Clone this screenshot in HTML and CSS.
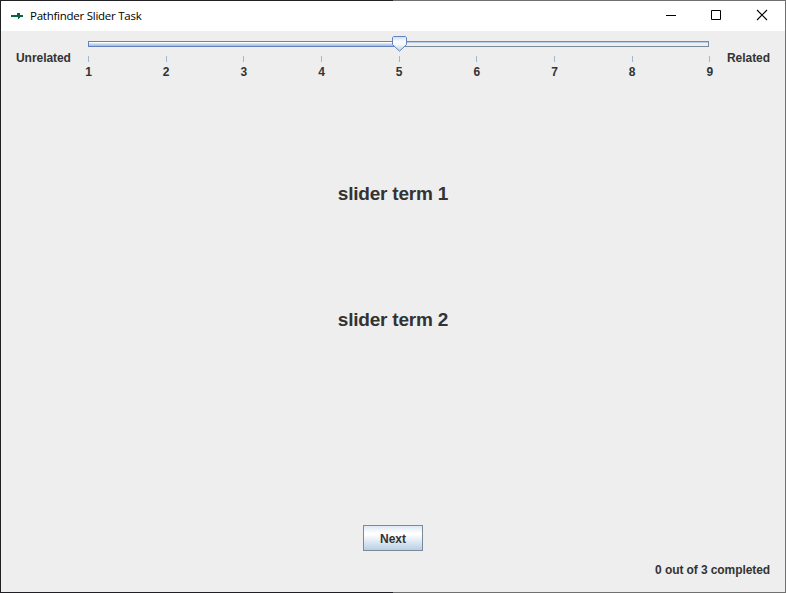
FILE: index.html
```html
<!DOCTYPE html>
<html lang="en">
<head>
<meta charset="utf-8">
<title>Pathfinder Slider Task</title>
<link rel="stylesheet" href="styles.css">
</head>
<body>
<div class="window">
  <header class="titlebar">
    <svg class="app-icon" width="12" height="6" viewBox="0 0 12 6" shape-rendering="crispEdges"><path fill="#08643f" d="M0 2h6V0h3v2h3v2H9v1H8v1H7V4H0z"/></svg>
    <span class="title">Pathfinder Slider Task</span>
    <div class="controls">
      <svg width="46" height="29" viewBox="0 0 46 29"><path d="M19 14.5h10" stroke="#000"/></svg>
      <svg width="46" height="29" viewBox="0 0 46 29"><path d="M18.5 9.5h9v9h-9z" fill="none" stroke="#000"/></svg>
      <svg width="46" height="29" viewBox="0 0 46 29"><path d="M18 9l10 10M28 9l-10 10" stroke="#000" stroke-width="1.1"/></svg>
    </div>
  </header>
  <main class="content">
    <section class="scale">
      <span class="end">Unrelated</span>
      <div class="slider">
        <div class="track">
          <div class="fill"></div>
          <svg class="thumb" width="15" height="16" viewBox="0 0 15 16">
            <defs><linearGradient id="shine" x2="0" y2="1"><stop offset="0" stop-color="#c8ddf2"/><stop offset=".35" stop-color="#fff"/><stop offset=".55" stop-color="#f4f8fc"/><stop offset="1" stop-color="#b8cfe5"/></linearGradient></defs>
            <path d="M1.5.5h12l1 1v7l-7 6.7-7-6.7v-7z" fill="url(#shine)" stroke="#6382bf"/>
          </svg>
        </div>
        <div class="ticks">
          <span>1</span><span>2</span><span>3</span><span>4</span><span>5</span><span>6</span><span>7</span><span>8</span><span>9</span>
        </div>
      </div>
      <span class="end right">Related</span>
    </section>
    <section class="terms">
      <div class="term">slider term 1</div>
      <div class="term">slider term 2</div>
    </section>
    <button class="next">Next</button>
    <footer class="progress">0 out of 3 completed</footer>
  </main>
</div>
</body>
</html>
```
FILE: styles.css
```css
* { box-sizing: border-box; }
body { margin: 0; }
.window {
  width: 786px;
  height: 593px;
  padding: 1px;
  display: flex;
  flex-direction: column;
  background:
    linear-gradient(#202024, #202024) 0 0 / 1px 100% no-repeat,
    linear-gradient(#707070, #707070) 100% 0 / 1px 100% no-repeat,
    linear-gradient(90deg, #202024 393px, #707070 393px);
  color: #333;
  font: bold 12px/14px "Liberation Sans", Arial, sans-serif;
}
.titlebar {
  display: flex;
  align-items: center;
  height: 30px;
  padding-left: 10px;
  background: #fff;
}
.app-icon { margin-right: 7px; }
.title {
  color: #000;
  font: 11.5px/16px "Open Sans", "Noto Sans", sans-serif;
  letter-spacing: -0.25px;
}
.controls { display: flex; height: 29px; margin-left: auto; align-self: flex-start; }
.content {
  flex: 1;
  display: flex;
  flex-direction: column;
  align-items: center;
  background: #eee;
}
.scale { display: flex; width: 100%; height: 56px; padding: 10px 15px 0; }
.end { width: 72px; padding-top: 10px; white-space: nowrap; letter-spacing: -0.05px; }
.end.right { width: 62px; text-align: right; }
.slider { flex: 1; min-width: 0; }
.track {
  position: relative;
  height: 6px;
  width: 621px;
  border: 1px solid #7a8a99;
  background: linear-gradient(#b8cfe5 1px, #eee 1px);
}
.fill {
  width: 311px;
  height: 6px;
  margin: -1px 0 0 -1px;
  border: 1px solid #6382bf;
  background: linear-gradient(#fff 1px, #e4eef7 1px, #c8dbed 2px, #a3b8dc);
}
.thumb { position: absolute; left: 303px; top: -6px; }
.ticks { display: flex; justify-content: space-between; width: 622.4px; margin-top: 9px; }
.ticks span {
  display: flex;
  flex-direction: column;
  align-items: center;
  width: 1px;
}
.ticks span::before { content: ""; width: 1px; height: 6px; margin-bottom: 3px; background: #a3b8cc; }
.terms {
  display: flex;
  flex-direction: column;
  gap: 102px;
  margin-top: 95px;
  font-size: 19px;
  line-height: 24px;
  letter-spacing: -0.2px;
}
.next {
  width: 60px;
  height: 26px;
  margin-top: 193px;
  padding: 1px 0 0;
  border: 1px solid #7a8a99;
  background: linear-gradient(#dde8f3, #fff 30%, #fff 35%, #b8cfe5);
  color: #333;
  font: inherit;
}
.progress { align-self: flex-end; margin: 12px 15px 0 0; letter-spacing: -0.09px; }
```
